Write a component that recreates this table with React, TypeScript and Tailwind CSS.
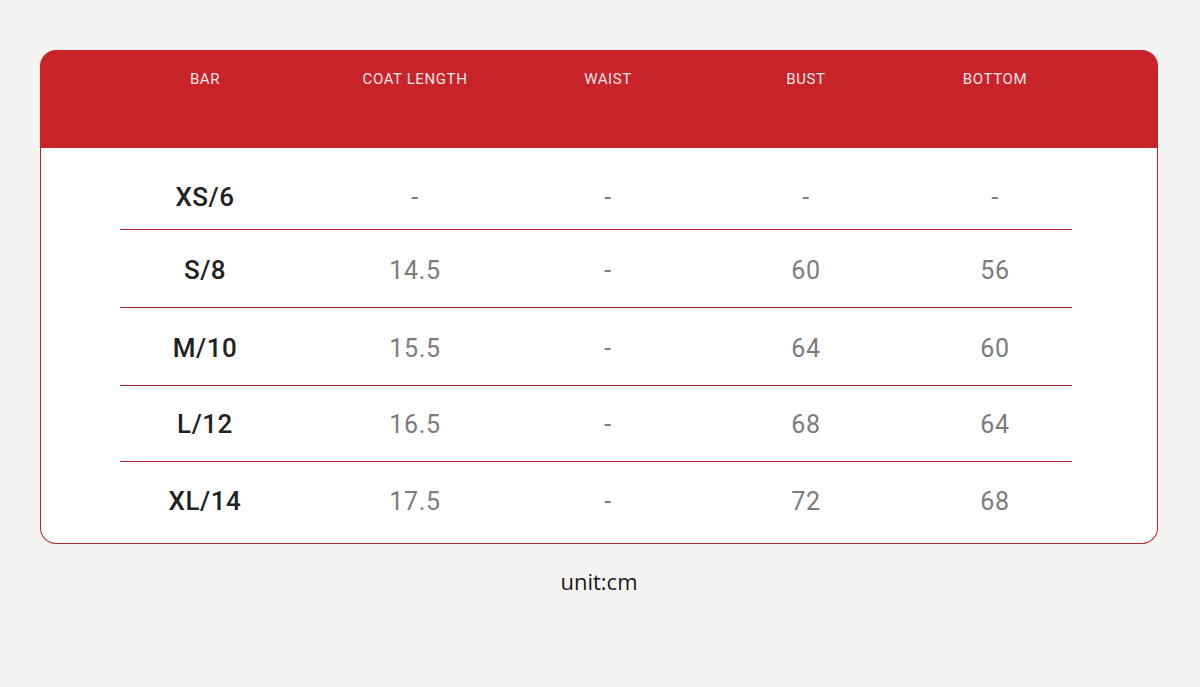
const columns = ['BAR', 'COAT LENGTH', 'WAIST', 'BUST', 'BOTTOM'];

const rows = [
  ['XS/6', '-', '-', '-', '-'],
  ['S/8', '14.5', '-', '60', '56'],
  ['M/10', '15.5', '-', '64', '60'],
  ['L/12', '16.5', '-', '68', '64'],
  ['XL/14', '17.5', '-', '72', '68'],
];

const rowHeights = ['h-[77px] pt-[14px]', 'h-[77px] pt-[4px]', 'h-[77px] pt-[4px]', 'h-[75px] pt-[2px]', 'h-[77px] pt-[2px]'];

const gridCols = 'grid grid-cols-[170px_250px_136px_260px_118px]';

export default function App() {
  return (
    <div className="w-[1200px] h-[687px] bg-[#f6f4f2] pt-[50px] pl-[40px] font-['Roboto',sans-serif]">
      <div className="w-[1118px]">
        {/* header */}
        <div className="h-[98px] rounded-t-[16px] bg-[#c9232a] pl-[80px] pt-[19px]">
          <div className={gridCols}>
            {columns.map((c) => (
              <div key={c} className="text-center text-[15px] leading-[20px] tracking-[0.04em] text-[#f7e4e4]">
                {c}
              </div>
            ))}
          </div>
        </div>

        {/* body */}
        <div className="h-[396px] rounded-b-[16px] border-x border-b border-[#b3282d] bg-white pl-[79px] pt-[4px]">
          <div className="w-[952px] flex flex-col">
            {rows.map((r, i) => (
              <div key={r[0]}>
                <div className={`${gridCols} items-center ${rowHeights[i]}`}>
                  {r.map((v, j) => (
                    <div
                      key={j}
                      className={
                        j === 0
                          ? 'text-center text-[26px] font-medium text-[#222222] tracking-[0.02em]'
                          : 'text-center text-[25px] text-[#7c7c7c] tracking-[0.03em]'
                      }
                    >
                      {v}
                    </div>
                  ))}
                </div>
                {i < rows.length - 1 && <div className="h-px bg-[#b8262c]" />}
              </div>
            ))}
          </div>
        </div>
      </div>

      <div className="w-[1118px] pt-[21px] text-center font-['Open_Sans',sans-serif] text-[22px] text-[#1a1a1a]">
        unit:cm
      </div>
    </div>
  );
}
